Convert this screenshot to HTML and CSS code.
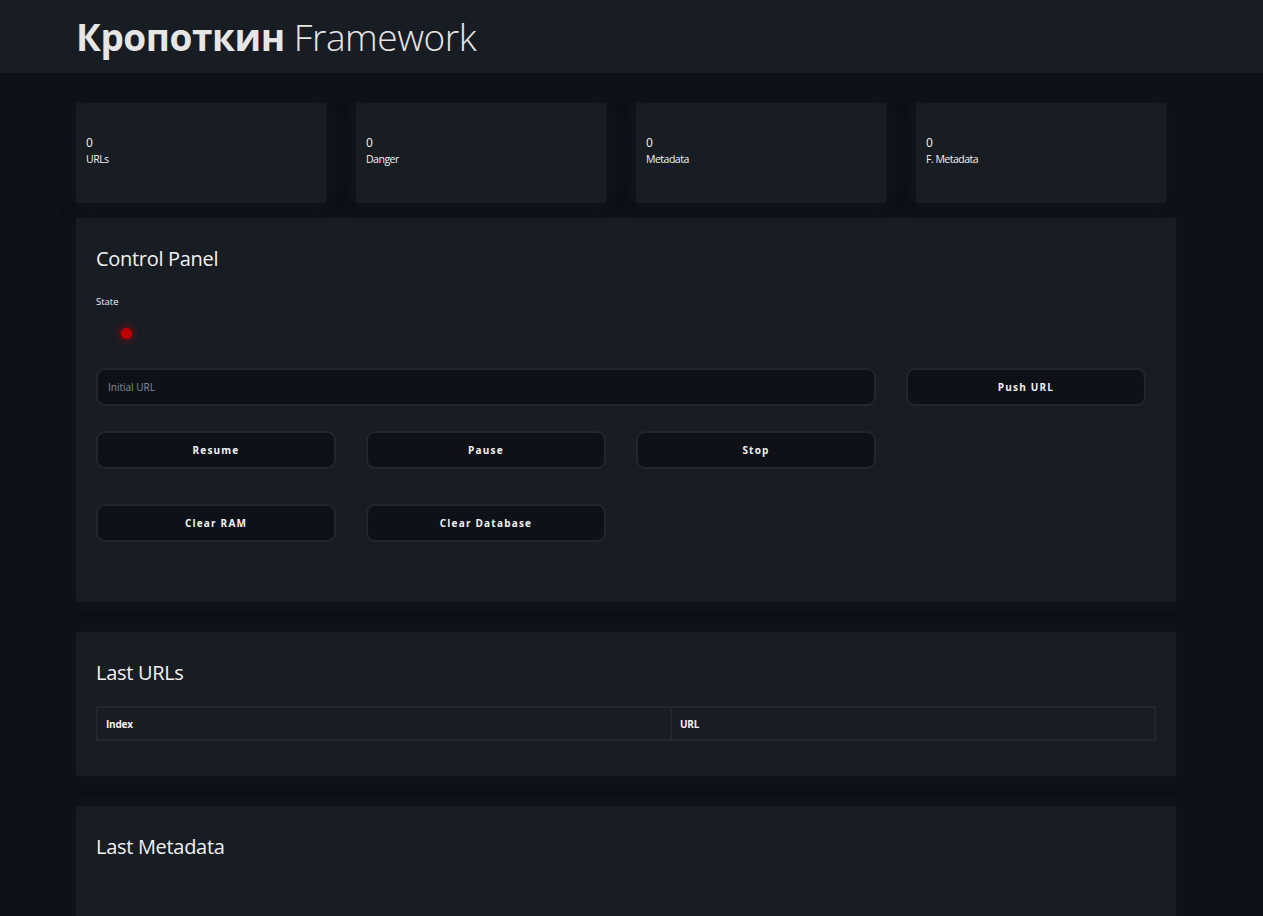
FILE: index.html
```html
<!DOCTYPE html>
<html lang="en">
<head>
<meta charset="utf-8">
<title>Кропоткин Framework</title>
<link rel="stylesheet" href="styles.css">
</head>
<body>
<header class="topbar">
  <div class="wrap">
    <h1 class="brand"><span class="brand-bold">Кропоткин</span> <span class="brand-light">Framework</span></h1>
  </div>
</header>
<main class="wrap main">
  <section class="stats">
    <div class="stat"><div class="stat-num">0</div><div class="stat-label">URLs</div></div>
    <div class="stat"><div class="stat-num">0</div><div class="stat-label">Danger</div></div>
    <div class="stat"><div class="stat-num">0</div><div class="stat-label">Metadata</div></div>
    <div class="stat"><div class="stat-num">0</div><div class="stat-label">F. Metadata</div></div>
  </section>

  <section class="panel control">
    <h2 class="panel-title">Control Panel</h2>
    <div class="state-label">State</div>
    <div class="state-row"><span class="led"></span></div>
    <div class="controls">
      <input class="url-input" type="text" placeholder="Initial URL">
      <button class="btn">Push URL</button>
      <button class="btn">Resume</button>
      <button class="btn">Pause</button>
      <button class="btn">Stop</button>
    </div>
    <div class="controls controls-2">
      <button class="btn">Clear RAM</button>
      <button class="btn">Clear Database</button>
    </div>
  </section>

  <section class="panel urls">
    <h2 class="panel-title">Last URLs</h2>
    <table class="tbl">
      <thead><tr><th class="col-index">Index</th><th>URL</th></tr></thead>
    </table>
  </section>

  <section class="panel meta">
    <h2 class="panel-title">Last Metadata</h2>
  </section>
</main>
</body>
</html>
```

FILE: styles.css
```css
* { box-sizing: border-box; }
html, body { margin: 0; padding: 0; }
body {
  background: #0e1117;
  color: #f2f2f2;
  font-family: "Open Sans", "Noto Sans", sans-serif;
}
.wrap { width: 1100px; margin-left: 76px; }
.topbar {
  background: #181c23;
  height: 73px;
}
.brand {
  margin: 0;
  font-size: 37px;
  line-height: 73px;
  color: #e6e6e6;
  letter-spacing: -0.45px;
}
.brand-bold { font-weight: 700; }
.brand-light { font-weight: 300; }

.main { padding-top: 30px; }

.stats {
  display: flex;
  gap: 30px;
  margin-bottom: 15px;
}
.stat {
  width: 250px;
  height: 100px;
  background: #181c23;
  box-shadow: 0 0 14px rgba(26, 30, 38, 0.55);
  padding: 0 10px 4px 10px;
  display: flex;
  flex-direction: column;
  justify-content: center;
}
.stat-num { font-size: 12px; line-height: 16px; }
.stat-label { font-size: 10.5px; line-height: 16px; letter-spacing: -0.5px; }

.panel {
  background: #181c23;
  box-shadow: 0 0 14px rgba(26, 30, 38, 0.55);
  padding: 20px 20px;
  margin-bottom: 30px;
}
.panel-title {
  margin: 0;
  font-weight: 400;
  font-size: 20px;
  line-height: 40px;
  letter-spacing: -0.3px;
  padding-top: 1px;
}
.control { height: 384px; }
.state-label {
  font-size: 9.5px;
  margin-top: 16px;
  line-height: 14px;
}
.state-row { height: 59px; display: flex; align-items: flex-start; padding-left: 25px; padding-top: 19px; }
.led {
  width: 11px; height: 11px;
  border-radius: 50%;
  background: #c00000;
  box-shadow: 0 0 6px 3px rgba(200, 0, 0, 0.35);
}
.controls {
  display: grid;
  grid-template-columns: repeat(4, 240px);
  column-gap: 30px;
  row-gap: 25px;
}
.controls-2 { margin-top: 35px; }
.url-input {
  grid-column: span 3;
  height: 38px;
  background: #0e1118;
  border: 2px solid #22262f;
  border-radius: 9px;
  color: #ddd;
  font-family: inherit;
  font-size: 10px;
  padding: 0 10px;
  outline: none;
}
.url-input::placeholder { color: #8a8d93; }
.btn {
  height: 38px;
  background: #0e1118;
  border: 2px solid #22262f;
  border-radius: 9px;
  color: #f2f2f2;
  font-family: inherit;
  font-weight: 700;
  font-size: 10px;
  letter-spacing: 1.2px;
}

.urls { padding-bottom: 35px; }
.tbl {
  width: 100%;
  margin-top: 13px;
  border-collapse: collapse;
  border: 2px solid #22262f;
}
.tbl th {
  text-align: left;
  font-size: 10px;
  font-weight: 700;
  height: 33px;
  padding: 0 8px;
  letter-spacing: -0.2px;
}
.tbl .col-index { width: 574px; border-right: 2px solid #22262f; }
.meta { height: 200px; }
```
